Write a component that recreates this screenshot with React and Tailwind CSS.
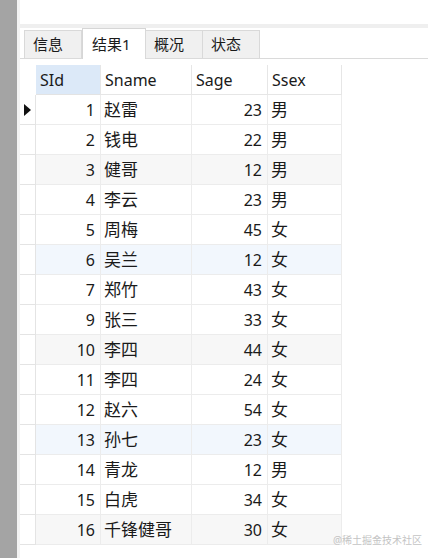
import React from 'react';

const ROWS = [
  [1, '赵雷', 23, '男'],
  [2, '钱电', 22, '男'],
  [3, '健哥', 12, '男'],
  [4, '李云', 23, '男'],
  [5, '周梅', 45, '女'],
  [6, '吴兰', 12, '女'],
  [7, '郑竹', 43, '女'],
  [9, '张三', 33, '女'],
  [10, '李四', 44, '女'],
  [11, '李四', 24, '女'],
  [12, '赵六', 54, '女'],
  [13, '孙七', 23, '女'],
  [14, '青龙', 12, '男'],
  [15, '白虎', 34, '女'],
  [16, '千锋健哥', 30, '女'],
];

const TABS = [
  { label: '信息', w: 'w-[58px]' },
  { label: '结果1', w: 'w-[64px]', active: true },
  { label: '概况', w: 'w-[58px]' },
  { label: '状态', w: 'w-[58px]' },
];

// faint row tints, as in the grid
function rowBg(i) {
  if (i === 5 || i === 11) return 'bg-[#f2f7fd]';
  if (i === 2 || i === 8 || i === 14) return 'bg-[#f7f7f7]';
  return 'bg-white';
}

export default function App() {
  return (
    <div className="relative w-[428px] h-[558px] flex overflow-hidden bg-white font-['Noto_Sans','Noto_Sans_CJK_SC',sans-serif] text-[#1a1a1a]">
      {/* left gutter */}
      <div className="w-[17px] flex-shrink-0 bg-[#a4a4a4]" />
      <div className="w-[3px] flex-shrink-0 bg-[#f3f3f3]" />

      <div className="flex-1 flex flex-col min-w-0">
        <div className="h-[24px] flex-shrink-0 bg-white" />
        <div className="h-[4px] flex-shrink-0 bg-[#efefef]" />

        {/* tab strip */}
        <div className="h-[31px] flex-shrink-0 flex items-end pl-[4px] border-b border-[#dadada]">
          {TABS.map((t) =>
            t.active ? (
              <div
                key={t.label}
                className={`${t.w} h-[31px] -mb-px bg-white border-x border-t border-[#d6d6d6] flex items-center pl-[9px] text-[15px]`}
              >
                {t.label}
              </div>
            ) : (
              <div
                key={t.label}
                className={`${t.w} h-[28px] bg-[#f0f0f0] border-l border-t border-r border-[#d9d9d9] -ml-px first:ml-0 flex items-center pl-[8px] text-[15px]`}
              >
                {t.label}
              </div>
            )
          )}
        </div>

        {/* grid */}
        <div className="pt-[6px]">
          <div className="flex h-[30px] text-[16px]">
            <div className="w-[16px] flex-shrink-0 bg-white" />
            <div className="w-[64px] flex-shrink-0 bg-[#dce9f8] border-b border-[#e3e3e3] flex items-center pl-[4px]">SId</div>
            <div className="w-[91px] flex-shrink-0 border-l border-b border-[#e6e6e6] flex items-center pl-[4px]">Sname</div>
            <div className="w-[76px] flex-shrink-0 border-l border-b border-[#e6e6e6] flex items-center pl-[4px]">Sage</div>
            <div className="w-[75px] flex-shrink-0 border-x border-b border-[#e6e6e6] flex items-center pl-[4px]">Ssex</div>
          </div>

          {ROWS.map(([id, name, age, sex], i) => (
            <div key={i} className="flex h-[30px] text-[16px]">
              <div className="w-[16px] flex-shrink-0 bg-white border-r border-b border-[#e4e4e4] flex items-center justify-center">
                {i === 0 && (
                  <svg width="7" height="12" viewBox="0 0 7 12">
                    <path d="M0 0 L7 6 L0 12 Z" fill="#111" />
                  </svg>
                )}
              </div>
              <div className={`w-[64px] flex-shrink-0 ${rowBg(i)} border-b border-[#ececec] flex items-center justify-end pr-[5px]`}>{id}</div>
              <div className={`w-[91px] flex-shrink-0 ${rowBg(i)} border-l border-b border-[#ececec] flex items-center pl-[3px] text-[17px]`}>{name}</div>
              <div className={`w-[76px] flex-shrink-0 ${rowBg(i)} border-l border-b border-[#ececec] flex items-center justify-end pr-[5px]`}>{age}</div>
              <div className={`w-[75px] flex-shrink-0 ${rowBg(i)} border-x border-b border-[#ececec] flex items-center pl-[3px] text-[17px]`}>{sex}</div>
            </div>
          ))}
        </div>
      </div>

      <div className="absolute left-[333px] top-[533px] text-[10px] leading-[14px] text-[#c4c4c4] whitespace-nowrap">
        @稀土掘金技术社区
      </div>
    </div>
  );
}
